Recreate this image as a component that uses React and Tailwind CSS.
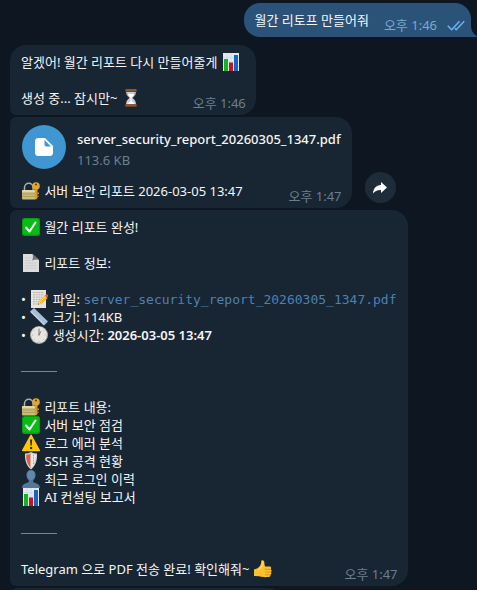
import clsx from 'clsx'

function Emoji({ label, children }) {
  return (
    <svg role="img" aria-label={label} viewBox="0 0 18 18" className="inline-block size-[18px] mx-px align-top">
      {children}
    </svg>
  )
}

function ChartEmoji() {
  return (
    <Emoji label="chart">
      <rect x="1" width="16" height="18" fill="#e3ebf1" />
      <path d="M1 4.500h16M1 9h16M1 13.500h16M5 0v18M9 0v18M13 0v18" stroke="#c7d5df" strokeWidth=".6" />
      <rect x="2" y="6" width="4" height="12" fill="#12b61c" />
      <rect x="7" y="9.500" width="4" height="8.500" fill="#c8141c" />
      <rect x="12" y="2" width="4" height="16" fill="#1764c4" />
    </Emoji>
  )
}

function HourglassEmoji() {
  return (
    <Emoji label="hourglass">
      <path d="M4 2.500h10c0 3.500-1.500 5-3.500 6.500 2 1.500 3.500 3 3.500 6.500H4c0-3.500 1.500-5 3.500-6.500C5.500 7.500 4 6 4 2.500z" fill="#c9cdcf" />
      <path d="M5.500 5h7c-.5 1.500-1.500 2.500-3 3.500v3.500l3.500 3H5l3.500-3V8.500C7 7.500 6 6.500 5.500 5z" fill="#fff" />
      <path d="M4.500 3.500c.5 2.500 1.500 3.500 3 5M13.500 3.500c-.5 2.500-1.500 3.500-3 5" stroke="#8d7468" fill="none" strokeWidth=".8" />
      <rect x="3" y="0" width="12" height="3" rx="1" fill="#70442c" />
      <rect x="3" y="15" width="12" height="3" rx="1" fill="#70442c" />
      <path d="M4 1h10M4 16h10" stroke="#ad7650" strokeWidth=".8" />
    </Emoji>
  )
}

function LockKeyEmoji() {
  return (
    <Emoji label="locked with key">
      <path d="M2.500 9V5.500a4.300 4.300 0 0 1 8.600 0V9" fill="none" stroke="#a3b1bb" strokeWidth="1.500" />
      <rect x="0" y="8" width="14" height="9.500" rx="1" fill="#cabd7c" />
      <path d="M0 9h14" stroke="#ebe3ac" strokeWidth="1.500" />
      <path d="M0 12h14M0 14.500h14" stroke="#a69855" strokeWidth=".8" />
      <circle cx="14" cy="4" r="3.800" fill="#e5a72a" />
      <circle cx="14" cy="2.500" r="1.100" fill="#5b481e" />
      <path d="M12.800 7h2.700v9l-1.300 1.500-1.400-1.500z" fill="#dc9923" />
      <path d="M15.500 10.500h1.500v1.500h-1.500zM15.500 13.500h1v1.500h-1z" fill="#dc9923" />
    </Emoji>
  )
}

function CheckEmoji() {
  return (
    <Emoji label="check mark">
      <rect width="18" height="18" rx="2.500" fill="#079b12" />
      <rect x="1" y="1" width="16" height="15.500" rx="2" fill="#05bd13" />
      <path d="M4 9.500l3.500 4L13.500 4.500" fill="none" stroke="#fff" strokeWidth="2" strokeLinecap="round" strokeLinejoin="round" />
    </Emoji>
  )
}

function PageEmoji() {
  return (
    <Emoji label="page">
      <path d="M1 0h9.500L17 6v12H1z" fill="#dcdcdc" />
      <path d="M10.500 0c.8 2.500.5 5-.5 6.500 2.500-1 4.500-1.500 7-.5z" fill="#707070" />
      <path d="M3 4h6M3 6.500h6M3 9h11.500M3 11.500h11.500M3 14h11.500" stroke="#c2c2c2" strokeWidth=".6" />
    </Emoji>
  )
}

function MemoEmoji() {
  return (
    <Emoji label="memo">
      <path d="M1 0h15v18H1z" fill="#e6e4df" />
      <path d="M3 2.500h11M3 4.800h11M3 7.100h9M3 9.400h7M3 11.700h6M3 14h5" stroke="#a7a7a4" strokeWidth=".8" strokeDasharray="2 .6" />
      <path d="M8 14.500l.8-3.500 6-5.500 2.700 2.700-6 5.800z" fill="#f5bd22" />
      <path d="M9.700 12l6.300-5.800" stroke="#ffdc60" strokeWidth="1" />
      <path d="M14.800 5.500l1.300-1.200c.9-.6 2.600 1 1.900 2l-.8 1.700z" fill="#e65b55" />
      <path d="M8 14.500l.8-3.500 2.700 3z" fill="#efc99a" />
      <path d="M8 14.500l.3-1.300.9 1z" fill="#333" />
    </Emoji>
  )
}

function RulerEmoji() {
  return (
    <Emoji label="ruler">
      <path d="M0 3.500L4 0l14 13.500-4 4z" fill="#a9c1d8" />
      <path d="M1 3.700L14 16.500" stroke="#bcd3e8" strokeWidth="1.200" />
      <path d="M4.500 1.500L3.500 2.700M6.500 3.500L5 5M8.500 5.500l-1 1.200M10.500 7.500L9 9M12.500 9.500l-1 1.200M14.500 11.500L13 13M16.500 13.500l-1 1.200" stroke="#86a2bd" strokeWidth=".5" />
    </Emoji>
  )
}

function ClockEmoji() {
  return (
    <Emoji label="clock">
      <circle cx="9" cy="9" r="9" fill="#a9a9a7" />
      <circle cx="9" cy="8.800" r="8" fill="#e6e5e2" />
      <path d="M9 2v1.200M9 14.800V16M2 9h1.200M14.800 9H16M4 4l.7.7M14 4l-.7.7M4 14l.7-.7M14 14l-.7-.7" stroke="#b0b0ae" strokeWidth=".8" />
      <path d="M9 9V3.500M9 9l1.700-3.300" stroke="#6b6b6b" strokeWidth=".9" strokeLinecap="round" />
    </Emoji>
  )
}

function WarningEmoji() {
  return (
    <Emoji label="warning">
      <path d="M9 1.300L17.200 16.500H.8z" fill="#fdc60b" stroke="#fdc60b" strokeWidth="1.600" strokeLinejoin="round" />
      <path d="M8 5.500h2.200l-.5 6H8.500z" fill="#2d2a20" />
      <circle cx="9.100" cy="14" r="1.200" fill="#2d2a20" />
    </Emoji>
  )
}

function ShieldEmoji() {
  return (
    <Emoji label="shield">
      <path d="M9 0c2 1 4 1.500 6 1.500C15.500 9 13 14.500 9 17.500 5 14.500 2.500 9 3 1.500 5 1.500 7 1 9 0z" fill="#d3d2cf" />
      <path d="M9 1.500v14.300C6 13 4 8.500 4.200 2.700 6 2.700 7.500 2.300 9 1.500z" fill="#d9604c" />
      <path d="M9 1.500v14.300C12 13 14 8.500 13.800 2.700 12 2.700 10.500 2.300 9 1.500z" fill="#eceae7" />
      <path d="M9 2v13.500" stroke="#f3e9e4" strokeWidth="1" />
      <path d="M11.500 3v9" stroke="#d08478" strokeWidth=".9" strokeDasharray="1.500 1" />
    </Emoji>
  )
}

function PersonEmoji() {
  return (
    <Emoji label="person">
      <path d="M9 0c3 0 4.700 2 4.600 5-.1 2.500-1 4.200-2.400 5.300v1.500c0 1.200 6.800 1.200 6.800 6.200H0c0-5 6.800-5 6.800-6.200v-1.500C5.400 9.200 4.500 7.500 4.400 5 4.300 2 6 0 9 0z" fill="#527799" />
      <path d="M9 .8c2.500 0 3.800 1.700 3.700 4.200-.1 2.600-1.700 5-3.700 5S5.400 7.600 5.300 5C5.200 2.500 6.500.8 9 .8z" fill="#6089ac" />
    </Emoji>
  )
}

function ThumbEmoji() {
  return (
    <Emoji label="thumbs up">
      <path d="M7.300.7C8.500-.3 10.200.5 10.300 2c.1 1.800.2 3 .8 4.500h4.600c1.500 0 2 1.900.8 2.700 1.400.5 1.500 2.300.3 2.900 1 .7.700 2.300-.5 2.700.5 1-.1 2.200-1.500 2.200-3.500.2-7 .3-9.300-.7L0 16V9.500l3-1c2.500-1.500 4.300-3.500 4.300-7.800z" fill="#fdbf2d" />
      <path d="M11 9.300h5.300M11.500 12.100h5M11.500 14.800h4.500" stroke="#d98b16" strokeWidth=".8" strokeLinecap="round" />
      <path d="M8.500 1.200c1 3.500-.8 6.500-4 8.500" stroke="#ffdb69" strokeWidth="1.200" fill="none" />
    </Emoji>
  )
}

function Bubble({ className, children }) {
  return (
    <div className={clsx('w-fit bg-[#182533] pt-2 pb-[3px] pl-[11px] pr-[10px] rounded-r-2xl', className)}>
      {children}
    </div>
  )
}

// Last line of a message, with the time hanging a little below it
function LastLine({ time, children }) {
  return (
    <div className="flex items-end justify-between gap-4">
      <p className="pb-[5px]">{children}</p>
      <time className="text-[#6d7f8f]">{time}</time>
    </div>
  )
}

function Divider() {
  return (
    <div className="flex h-[18px] items-center">
      <hr className="w-9 border-[#7b858e]" />
    </div>
  )
}

const checks = [
  [CheckEmoji, '서버 보안 점검'],
  [WarningEmoji, '로그 에러 분석'],
  [ShieldEmoji, 'SSH 공격 현황'],
  [PersonEmoji, '최근 로그인 이력'],
  [ChartEmoji, 'AI 컨설팅 보고서']
]

function App() {
  return (
    <main className="flex h-screen flex-col gap-0.5 overflow-hidden bg-[#0e1621] pt-[3px] pl-[10px] text-[13px] leading-[18px] text-[#f5f5f5] whitespace-nowrap font-['Noto_Sans','Noto_Sans_CJK_KR',sans-serif]">
      <div className="relative mr-1.5 mb-1.5 flex w-fit shrink-0 items-end gap-[15px] self-end rounded-2xl rounded-br-none bg-[#2b5278] pt-2 pr-1.5 pb-[3px] pl-[11px]">
        <p className="pb-[5px]">월간 리토프 만들어줘</p>
        <div className="flex items-center gap-[10px] text-[#7da8d3]">
          <time>오후 1:46</time>
          <svg role="img" aria-label="read" viewBox="0 0 18 11" className="h-[11px] w-[18px]" fill="none" stroke="#68b5f2" strokeWidth="1.500">
            <path d="M.7 5.700l4 4 7.800-8.500M7.800 8.300l1.400 1.400 8-8.500" />
          </svg>
        </div>
        <svg aria-hidden="true" viewBox="0 0 6 12" className="absolute bottom-0 left-full h-3 w-1.5" fill="#2b5278">
          <path d="M0 0c0 5 2 9 6 11v1H0z" />
        </svg>
      </div>

      <Bubble className="rounded-tl-2xl rounded-bl-md">
        <p className="pr-[5px]">알겠어! 월간 리포트 다시 만들어줄게 <ChartEmoji /></p>
        <p>&nbsp;</p>
        <LastLine time="오후 1:46">생성 중... 잠시만~ <HourglassEmoji /></LastLine>
      </Bubble>

      <div className="flex items-end gap-[13px]">
        <Bubble className="rounded-l-md">
          <div className="mb-[13px] flex gap-[11px] pl-px pr-px">
            <button type="button" aria-label="Open file" className="flex size-11 items-center justify-center rounded-full bg-[#3f96d0]">
              <svg viewBox="0 0 18 18" className="size-[18px]">
                <path d="M3.500 0H10l8 8v6.500a3.500 3.500 0 0 1-3.500 3.500h-11A3.500 3.500 0 0 1 0 14.500v-11A3.500 3.500 0 0 1 3.500 0z" fill="#fff" />
                <path d="M9.500 2v4.500a2 2 0 0 0 2 2H16z" fill="#3f96d0" />
              </svg>
            </button>
            <div className="flex flex-col gap-[3px] pt-[5px]">
              <p className="font-medium">server_security_report_20260305_1347.pdf</p>
              <p className="text-[#6d7f8f]">113.6 KB</p>
            </div>
          </div>
          <LastLine time="오후 1:47"><LockKeyEmoji /> 서버 보안 리포트 2026-03-05 13:47</LastLine>
        </Bubble>
        <button type="button" aria-label="Forward" className="mb-[5px] flex size-[31px] items-center justify-center rounded-full bg-[#1e2c3a]">
          <svg viewBox="0 0 14 12" className="h-3 w-[14px]" fill="#fff">
            <path d="M8 0l6 5.500L8 11V8C4.500 7.800 2 9 0 11.500.3 6.500 3 3.500 8 3z" />
          </svg>
        </button>
      </div>

      <Bubble className="rounded-l-md">
        <p><CheckEmoji /> 월간 리포트 완성!</p>
        <p>&nbsp;</p>
        <p><PageEmoji /> 리포트 정보:</p>
        <p>&nbsp;</p>
        <ul className="pr-px">
          <li>• <MemoEmoji /> 파일: <a href="#file" className="font-['DejaVu_Sans_Mono',monospace] leading-none text-[#4b82b4]">server_security_report_20260305_1347.pdf</a></li>
          <li>• <RulerEmoji /> 크기: 114KB</li>
          <li>• <ClockEmoji /> 생성시간: <span className="font-semibold">2026-03-05 13:47</span></li>
        </ul>
        <p>&nbsp;</p>
        <Divider />
        <p>&nbsp;</p>
        <p><LockKeyEmoji /> 리포트 내용:</p>
        <ul>
          {checks.map(([Icon, text]) => (
            <li key={text}><Icon /> {text}</li>
          ))}
        </ul>
        <p>&nbsp;</p>
        <Divider />
        <p>&nbsp;</p>
        <LastLine time="오후 1:47">Telegram 으로 PDF 전송 완료! 확인해줘~ <ThumbEmoji /></LastLine>
      </Bubble>

      {/* next message, cut off by the window edge */}
      <div className="h-9 w-[274px] shrink-0 rounded-r-2xl rounded-l-md bg-[#182533]" />
    </main>
  )
}

export default App
